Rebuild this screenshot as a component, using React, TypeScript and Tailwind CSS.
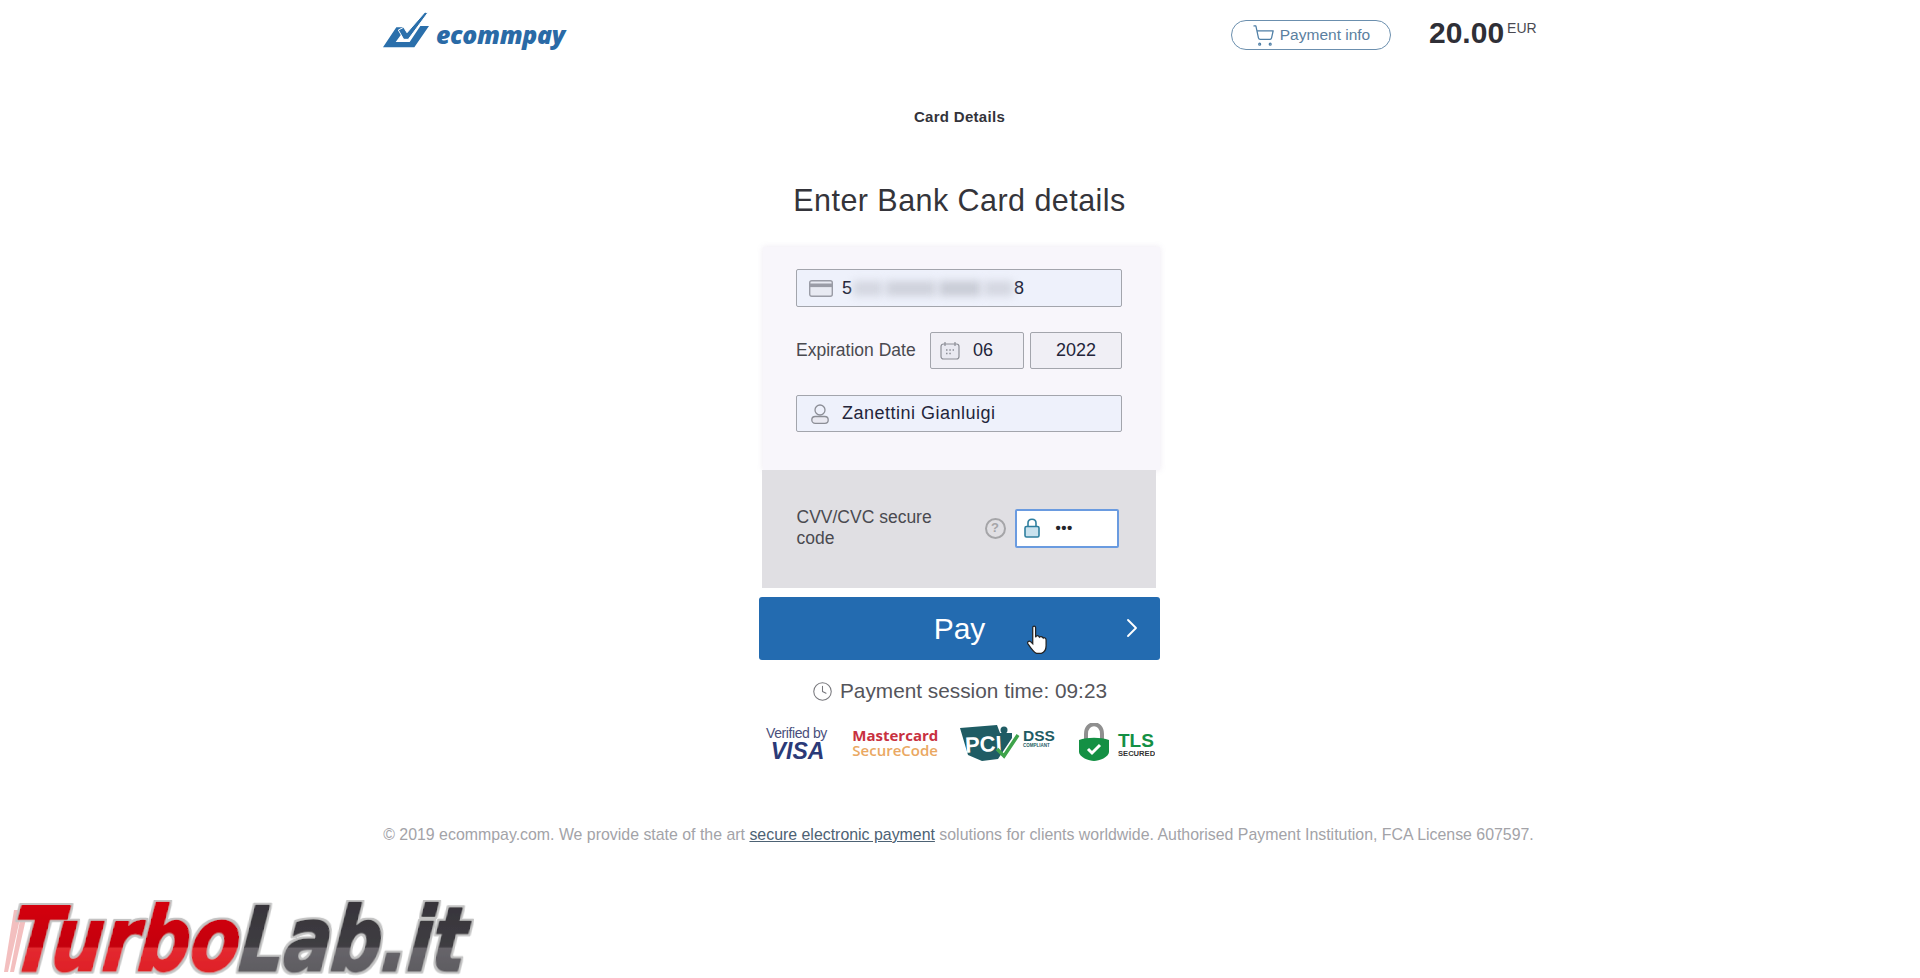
import React from "react";
import { ShoppingCart, ChevronRight, Clock } from "lucide-react";

const EcommpayLogo = () => (
  <div className="flex items-end gap-[7px]">
    <svg width="46" height="36" viewBox="0 0 138 108">
      <path d="M0 106 L40 46 L60 46 L60 60 L38 90 L80 90 L112 42 L138 42 L94 106 Z" fill="#2a6fab" />
      <path d="M46 54 L62 46 L72 62 L126 0 L134 3 L76 82 L62 82 Z" fill="#2a6fab" stroke="#fff" strokeWidth="3" />
    </svg>
    <span className="mb-[0px] text-[24.8px] leading-[27px] font-extrabold italic text-[#2a6aa6] font-['Open_Sans',sans-serif] tracking-[-0.3px]">
      ecommpay
    </span>
  </div>
);

const VisaBadge = () => (
  <div className="mt-[2px] flex w-[65px] flex-col items-center text-[#2b3a78]">
    <span className="text-[14px] leading-[15px] tracking-[-0.4px] text-[#4a4f7c]">Verified by</span>
    <span className="ml-[2px] text-[23px] leading-[21px] font-bold italic">VISA</span>
  </div>
);

const MastercardBadge = () => (
  <div className="flex w-[84px] flex-col font-['Open_Sans',sans-serif] text-[15px] leading-[15px] font-bold">
    <span className="text-[#c8313f]">Mastercard</span>
    <span className="text-[#eaa862] font-semibold">SecureCode</span>
  </div>
);

const PciBadge = () => (
  <svg width="96" height="36" viewBox="0 0 96 36">
    <path d="M0 3 L37 0 L40 8 L52 8 L52 13 L38 34 L22 36 L8 30 Z" fill="#1f5c64" />
    <g transform="rotate(-3 20 20)">
      <text x="5" y="27" fontSize="22" fontWeight="700" fill="#fff" fontFamily="Liberation Sans">PCI</text>
    </g>
    <circle cx="44" cy="5" r="3.5" fill="#1f5c64" />
    <path d="M37 24 L44 31 L58 10" fill="none" stroke="#3ea34a" strokeWidth="3.5" />
    <text x="63" y="16" fontSize="15.5" fontWeight="700" fill="#1f5c64" fontFamily="Liberation Sans">DSS</text>
    <text x="63" y="21.5" fontSize="4.5" fontWeight="700" fill="#1f5c64" fontFamily="Liberation Sans">COMPLIANT</text>
  </svg>
);

const TlsBadge = () => (
  <svg width="76" height="39" viewBox="0 0 76 39">
    <path d="M7 16 V11 C7 -2 23 -2 23 11 V16" fill="none" stroke="#8f8f8f" strokeWidth="4" />
    <path d="M0 17 C8 14 22 14 30 17 V29 C30 34 20 38 15 38 C10 38 0 34 0 29 Z" fill="#149044" />
    <path d="M9 26 L13 30 L21 22" fill="none" stroke="#fff" strokeWidth="3" />
    <text x="39" y="24" fontSize="19" fontWeight="700" fill="#149044" fontFamily="Liberation Sans">TLS</text>
    <text x="39" y="32.5" fontSize="7.6" fontWeight="700" fill="#333" fontFamily="Liberation Sans">SECURED</text>
  </svg>
);

const TurboLabWatermark = () => (
  <svg className="absolute left-0 bottom-0" width="484" height="78" viewBox="0 0 484 78">
    <defs>
      <linearGradient id="redFill" gradientUnits="userSpaceOnUse" x1="0" y1="6" x2="0" y2="72">
        <stop offset="0" stopColor="#d3000a" />
        <stop offset="0.62" stopColor="#c4000c" />
        <stop offset="0.64" stopColor="#e42a30" />
        <stop offset="1" stopColor="#de2027" />
      </linearGradient>
      <linearGradient id="darkFill" gradientUnits="userSpaceOnUse" x1="0" y1="6" x2="0" y2="72">
        <stop offset="0" stopColor="#37353b" />
        <stop offset="0.62" stopColor="#3f3d42" />
        <stop offset="0.64" stopColor="#67656a" />
        <stop offset="1" stopColor="#5e5c61" />
      </linearGradient>
      <filter id="outline" x="-5%" y="-5%" width="110%" height="110%">
        <feMorphology in="SourceAlpha" operator="dilate" radius="2" result="grown" />
        <feFlood floodColor="#c4c4c4" />
        <feComposite in2="grown" operator="in" result="edge" />
        <feMerge>
          <feMergeNode in="edge" />
          <feMergeNode in="SourceGraphic" />
        </feMerge>
      </filter>
    </defs>
    <path d="M14 10 H22 L8 72 H4 Z M22 10 H28 L14 72 H10 Z" fill="#e98a8a" opacity="0.55" />
    <g
      filter="url(#outline)"
      transform="translate(7 0) skewX(-6)"
      fontFamily="DejaVu Sans"
      fontWeight="700"
      fontStyle="italic"
      fontSize="88"
      strokeWidth="2.5"
      strokeLinejoin="round"
    >
      <text x="10" y="71" textLength="228" lengthAdjust="spacingAndGlyphs" fill="url(#redFill)" stroke="url(#redFill)">
        Turbo
      </text>
      <text x="238" y="71" textLength="226" lengthAdjust="spacingAndGlyphs" fill="url(#darkFill)" stroke="url(#darkFill)">
        Lab.it
      </text>
    </g>
  </svg>
);

const CalendarIcon = () => (
  <svg width="20" height="19" viewBox="0 0 20 19" fill="none" stroke="#8c8e96" strokeWidth="1.2">
    <rect x="1" y="3" width="18" height="15" rx="2.5" fill="#e9e9f1" />
    <path d="M5 1 V5 M15 1 V5" />
    <path d="M6 9 H7.5 M9.3 9 H10.8 M12.6 9 H14 M6 12.5 H7.5 M9.3 12.5 H10.8" strokeWidth="1.6" />
  </svg>
);

const PersonIcon = () => (
  <svg width="18" height="20" viewBox="0 0 18 20" fill="none" stroke="#8c8e96" strokeWidth="1.3">
    <circle cx="9" cy="6" r="5" />
    <rect x="0.8" y="12.5" width="16.4" height="6.8" rx="3.4" fill="#e9e9f1" />
  </svg>
);

const CardIcon = () => (
  <svg width="24" height="17" viewBox="0 0 24 17" fill="none">
    <rect x="0.7" y="0.7" width="22.6" height="15.6" rx="2" fill="#e8eaf2" stroke="#9a9ca6" strokeWidth="1.4" />
    <rect x="0.7" y="3.5" width="22.6" height="3.6" fill="#9a9ca6" />
  </svg>
);

const LockIcon = () => (
  <svg width="16" height="20" viewBox="0 0 16 20" fill="none" stroke="#2f7f9f" strokeWidth="1.6">
    <path d="M4 9 V5 C4 0 12 0 12 5 V9" />
    <rect x="1" y="8.5" width="14" height="10.5" rx="1.5" fill="#c9e2ee" />
  </svg>
);

const fieldClass =
  "flex items-center border border-[#a3a5ac] rounded-[2px] bg-[#eef1fb] text-[#23253a] text-[18px]";

export default function App() {
  return (
    <div className="relative h-[978px] overflow-hidden bg-white pr-[1px] font-['Liberation_Sans',sans-serif]">
      <div className="mx-auto w-[1153px]">
        <header className="flex h-[66px] items-start justify-between pt-[12px]">
          <EcommpayLogo />
          <div className="flex items-start pt-[8px]">
            <button className="flex h-[30px] w-[160px] items-center justify-center gap-[5px] rounded-full border border-[#6b8fae] text-[15.5px] text-[#5b7f9f]">
              <ShoppingCart size={23} strokeWidth={1.3} className="text-[#4f7fa6]" />
              Payment info
            </button>
            <div className="ml-[38px] mt-[-4px] flex items-start w-[107px] text-[#2f2f36]">
              <span className="text-[30px] leading-[34px] font-bold">20.00</span>
              <span className="ml-[3px] mt-[4px] text-[14px] leading-[16px] text-[#4a4a52]">EUR</span>
            </div>
          </div>
        </header>
      </div>

      <main className="flex flex-col items-center">
        <h2 className="mt-[43px] text-[15px] leading-[16px] font-bold text-[#33333a] tracking-[0.3px]">Card Details</h2>
        <h1 className="mt-[58px] text-[30.5px] leading-[34px] text-[#34343a] tracking-[0.45px]">Enter Bank Card details</h1>

        <div className="mt-[30px] flex w-[401px] flex-col items-center">
          <div className="h-[223px] w-[397px] self-end bg-[#f8f6fb] pl-[33px] pt-[22px] shadow-[0_0_6px_rgba(235,230,240,0.9)]">
            <div className={`${fieldClass} h-[38px] w-[326px] pl-[12px]`}>
              <CardIcon />
              <span className="ml-[9px]">5</span>
              <div className="mx-[1px] flex h-[15px] w-[160px] gap-[3px] opacity-80">
                <div className="h-full w-[30px] bg-[#cdd0da] blur-[4px]" />
                <div className="h-full w-[50px] bg-[#c6c9d3] blur-[4px]" />
                <div className="h-full w-[42px] bg-[#bfc2cc] blur-[4px]" />
                <div className="h-full w-[29px] bg-[#cdd0da] blur-[4px]" />
              </div>
              <span>8</span>
            </div>
            <div className="mt-[25px] flex h-[37px] items-center">
              <span className="w-[134px] text-[17.5px] text-[#4a4a50]">Expiration Date</span>
              <div className={`${fieldClass} h-[37px] w-[94px] bg-[#f0eff5] pl-[9px]`}>
                <CalendarIcon />
                <span className="ml-[13px]">06</span>
              </div>
              <div className={`${fieldClass} ml-[6px] h-[37px] w-[92px] justify-center bg-[#f0eff5]`}>2022</div>
            </div>
            <div className={`${fieldClass} mt-[26px] h-[37px] w-[326px] pl-[14px]`}>
              <PersonIcon />
              <span className="ml-[13px] tracking-[0.5px]">Zanettini Gianluigi</span>
            </div>
          </div>

          <div className="mr-[2px] flex h-[118px] w-[394px] items-center bg-[#e0dfe3] pl-[34px]">
            <span className="mt-[-2px] ml-[1px] w-[147px] text-[17.5px] leading-[21px] text-[#4a4a50]">CVV/CVC secure code</span>
            <span className="ml-[41px] mt-[-2px] flex h-[21px] w-[21px] shrink-0 items-center justify-center rounded-full border-2 border-[#a5a5a8] text-[13px] font-bold text-[#a5a5a8]">?</span>
            <div className="ml-[9px] mt-[-2px] flex h-[39px] w-[104px] items-center rounded-[2px] border-2 border-[#6a9be0] bg-white pl-[7px]">
              <LockIcon />
              <span className="ml-[16px] text-[15px] leading-[20px] font-bold text-[#25252b] tracking-[0.5px]">•••</span>
            </div>
          </div>

          <button className="relative mt-[9px] flex h-[63px] w-[401px] items-center justify-center rounded-[3px] bg-[#236bb0] text-[30px] text-white">
            Pay
            <ChevronRight size={32} strokeWidth={1.4} className="absolute right-[12px] top-[15px]" />
            <svg className="absolute left-[268px] top-[28px]" width="21" height="30" viewBox="0 0 22 30">
              <path
                d="M6 2 C6 0 9 0 9 2 V12 C10 10 12 10 13 12 C14 11 16 11 17 13 C18 12 20 13 20 15 V21 C20 25 18 28 15 29 H10 C7 28 5 25 1 19 C0 17 2 15 4 17 L6 19 Z"
                fill="#fff"
                stroke="#222"
                strokeWidth="1.3"
              />
            </svg>
          </button>

          <div className="mt-[18px] flex h-[26px] items-center text-[20.8px] text-[#55555b]">
            <Clock size={21} strokeWidth={1.2} className="mr-[7px] text-[#77777c]" />
            Payment session time: 09:23
          </div>

          <div className="mt-[19px] flex h-[39px] w-[391px] items-center justify-between">
            <VisaBadge />
            <MastercardBadge />
            <PciBadge />
            <TlsBadge />
          </div>
        </div>

        <p className="mt-[63px] ml-[-2px] text-[15.9px] leading-[20px] text-[#a3a3a8]">
          © 2019 ecommpay.com. We provide state of the art{" "}
          <a className="text-[#4d6274] underline">secure electronic payment</a> solutions for clients worldwide. Authorised Payment Institution, FCA License 607597.
        </p>
      </main>

      <TurboLabWatermark />
    </div>
  );
}
